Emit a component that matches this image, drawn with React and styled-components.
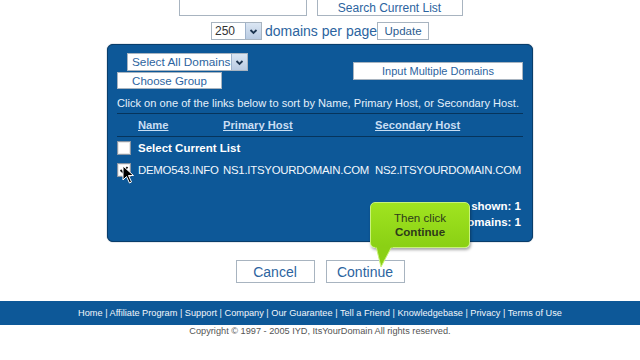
import React from 'react'
import styled, { createGlobalStyle } from 'styled-components'

const Global = createGlobalStyle`
  html, body {
    margin: 0;
    padding: 0;
    background: #ffffff;
    font-family: "Liberation Sans", Arial, sans-serif;
  }
`

const Page = styled.div`
  width: 640px;
  height: 360px;
  overflow: hidden;
  position: relative;
  display: flex;
  flex-direction: column;
  align-items: center;
`

const SearchRow = styled.div`
  display: flex;
  gap: 10px;
  margin-top: -6px;
  margin-left: 1px;
`

const SearchBox = styled.div`
  width: 126px;
  height: 20px;
  border: 1px solid #a8b4c0;
  background: #fff;
`

const PlainButton = styled.div`
  box-sizing: border-box;
  display: flex;
  align-items: center;
  justify-content: center;
  white-space: nowrap;
  width: ${p => p.$w}px;
  height: ${p => p.$h}px;
  border: 1px solid #a8b4c0;
  background: #fff;
  color: ${p => p.$color || '#2c64a0'};
  font-size: ${p => p.$size || 12}px;
  padding-top: ${p => p.$pt || 0}px;
`

const PerPageRow = styled.div`
  display: flex;
  align-items: center;
  margin-top: 6px;
`

const FakeSelect = styled.div`
  box-sizing: border-box;
  display: flex;
  align-items: stretch;
  width: ${p => p.$w}px;
  height: 18px;
  background: #fff;
  border: 1px solid #a8b4c0;
  font-size: ${p => p.$size || 12}px;
  color: ${p => p.$color || '#333'};
  white-space: nowrap;
`

const SelectText = styled.span`
  flex: 1;
  display: flex;
  align-items: center;
  overflow: hidden;
  padding-left: ${p => p.$pl || 4}px;
`

const SelectArrow = styled.span`
  flex: 0 0 15px;
  display: flex;
  align-items: center;
  justify-content: center;
  background: linear-gradient(#dbe6f3, #b9cbe2);
  border-left: 1px solid #9fb3cc;
`

const PerPageLabel = styled.span`
  font-size: 14px;
  color: #2c64a0;
  margin: 0 0 0 3px;
`

const Panel = styled.div`
  box-sizing: border-box;
  margin-top: 4px;
  width: 426px;
  height: 198px;
  background: #0d5898;
  border: 1px solid #083d6b;
  border-radius: 6px;
  box-shadow: 0 0 1px #0a2f52;
  padding: 8px 9px 0 9px;
  display: flex;
  flex-direction: column;
  color: #fff;
  position: relative;
`

const Controls = styled.div`
  display: flex;
  justify-content: space-between;
`

const LeftControls = styled.div`
  display: flex;
  flex-direction: column;
  align-items: flex-start;
  gap: 1px;
`

const Indent = styled.div`
  padding-left: 10px;
`

const RightControls = styled.div`
  padding-top: 9px;
`

const Hint = styled.div`
  margin-top: 8px;
  font-size: 11.1px;
  color: #e4f0fb;
  white-space: nowrap;
  padding-bottom: 4px;
  border-bottom: 1px solid #06345c;
`

const Grid = styled.div`
  display: grid;
  grid-template-columns: 21px 85px 152px 1fr;
  align-items: center;
  height: ${p => p.$h}px;
  border-bottom: ${p => (p.$line ? '1px solid #06345c' : 'none')};
  margin-top: ${p => p.$mt || 0}px;
`

const HeadLink = styled.span`
  font-size: 11.2px;
  font-weight: bold;
  text-decoration: underline;
  color: #c9def3;
`

const Cell = styled.span`
  font-size: 11.4px;
  color: #f2f7fc;
  white-space: nowrap;
  letter-spacing: -0.25px;
`

const BoldCell = styled.span`
  grid-column: 2 / span 3;
  font-size: 11.5px;
  font-weight: bold;
  color: #fff;
`

const Check = styled.span`
  box-sizing: border-box;
  width: 14px;
  height: 14px;
  background: #fff;
  border: 1px solid #8a96a4;
  box-shadow: inset 0 0 0 1px #e7e7e7;
  display: flex;
  align-items: center;
  justify-content: center;
`

const Totals = styled.div`
  margin-top: 17px;
  align-self: flex-end;
  text-align: right;
  font-size: 11.5px;
  font-weight: bold;
  line-height: 16px;
  color: #fff;
  padding-right: 2px;
`

const Cursor = styled.svg`
  position: absolute;
  left: 14px;
  top: 120px;
`

const ActionRow = styled.div`
  display: flex;
  gap: 11px;
  margin-top: 18px;
`

const Bubble = styled.div`
  position: absolute;
  left: 370px;
  top: 202px;
  width: 100px;
  height: 46px;
  box-sizing: border-box;
  background: linear-gradient(#a0e420, #8ad014);
  border: 1px solid #c8f27a;
  border-radius: 5px;
  box-shadow: 1px 2px 3px rgba(0, 0, 0, 0.35);
  display: flex;
  flex-direction: column;
  align-items: center;
  justify-content: center;
  font-size: 11.6px;
  line-height: 14px;
  color: #2d3a1a;
`

const BubbleTail = styled.svg`
  position: absolute;
  left: 375px;
  top: 246px;
`

const Footer = styled.div`
  margin-top: 18px;
  width: 100%;
  height: 24px;
  background: #0d5898;
  display: flex;
  align-items: center;
  justify-content: center;
  color: #f2f6fb;
  font-size: 9.2px;
  white-space: nowrap;
`

const Copy = styled.div`
  margin-top: 1px;
  font-size: 9.2px;
  color: #555;
`

const Arrow = () => (
  <svg width="9" height="7" viewBox="0 0 9 7">
    <path d="M1.5 2 L4.5 5 L7.5 2" fill="none" stroke="#1d3550" strokeWidth="1.8" />
  </svg>
)

const links = ['Home', 'Affiliate Program', 'Support', 'Company', 'Our Guarantee', 'Tell a Friend', 'Knowledgebase', 'Privacy', 'Terms of Use']

export default function App() {
  return (
    <Page>
      <Global />
      <SearchRow>
        <SearchBox />
        <PlainButton $w={146} $h={22} $pt={5}>Search Current List</PlainButton>
      </SearchRow>
      <PerPageRow>
        <FakeSelect $w={51}>
          <SelectText $pl={3}>250</SelectText>
          <SelectArrow><Arrow /></SelectArrow>
        </FakeSelect>
        <PerPageLabel>domains per page</PerPageLabel>
        <PlainButton $w={52} $h={18} $size={11.5} $color="#2c5c90">Update</PlainButton>
      </PerPageRow>
      <Panel>
        <Controls>
          <LeftControls>
            <Indent>
              <FakeSelect $w={121} $size={11.8} $color="#2c64a0">
                <SelectText>Select All Domains</SelectText>
                <SelectArrow><Arrow /></SelectArrow>
              </FakeSelect>
            </Indent>
            <PlainButton $w={105} $h={17} $size={11.5}>Choose Group</PlainButton>
          </LeftControls>
          <RightControls>
            <PlainButton $w={170} $h={18} $size={11}>Input Multiple Domains</PlainButton>
          </RightControls>
        </Controls>
        <Hint>Click on one of the links below to sort by Name, Primary Host, or Secondary Host.</Hint>
        <Grid $h={22} $line>
          <span />
          <HeadLink>Name</HeadLink>
          <HeadLink>Primary Host</HeadLink>
          <HeadLink>Secondary Host</HeadLink>
        </Grid>
        <Grid $h={22}>
          <Check />
          <BoldCell>Select Current List</BoldCell>
        </Grid>
        <Grid $h={22}>
          <Check>
            <svg width="10" height="10" viewBox="0 0 10 10">
              <path d="M1.5 5 L4 7.5 L8.5 2" fill="none" stroke="#111" strokeWidth="1.8" />
            </svg>
          </Check>
          <Cell>DEMO543.INFO</Cell>
          <Cell>NS1.ITSYOURDOMAIN.COM</Cell>
          <Cell>NS2.ITSYOURDOMAIN.COM</Cell>
        </Grid>
        <Totals>
          <div>Domains shown: 1</div>
          <div>Total domains: 1</div>
        </Totals>
        <Cursor width="14" height="20" viewBox="0 0 14 20">
          <path d="M1 1 L1 15 L4.5 11.5 L7.5 18 L9.5 17 L6.5 10.5 L11.5 10.5 Z" fill="#000" stroke="#fff" strokeWidth="1" />
        </Cursor>
      </Panel>
      <ActionRow>
        <PlainButton $w={79} $h={23} $size={14} $color="#2c64a0">Cancel</PlainButton>
        <PlainButton $w={79} $h={23} $size={14} $color="#2c64a0">Continue</PlainButton>
      </ActionRow>
      <Footer>{links.join(' | ')}</Footer>
      <Copy>Copyright © 1997 - 2005 IYD, ItsYourDomain All rights reserved.</Copy>
      <Bubble>
        <span>Then click</span>
        <b>Continue</b>
      </Bubble>
      <BubbleTail width="20" height="24" viewBox="0 0 20 24">
        <path d="M1 0 L6 21 L17 0 Z" fill="#8bd015" stroke="#c8f27a" strokeWidth="1" />
        <path d="M0 0.5 L18 0.5" stroke="#8bd015" strokeWidth="2" />
      </BubbleTail>
    </Page>
  )
}
